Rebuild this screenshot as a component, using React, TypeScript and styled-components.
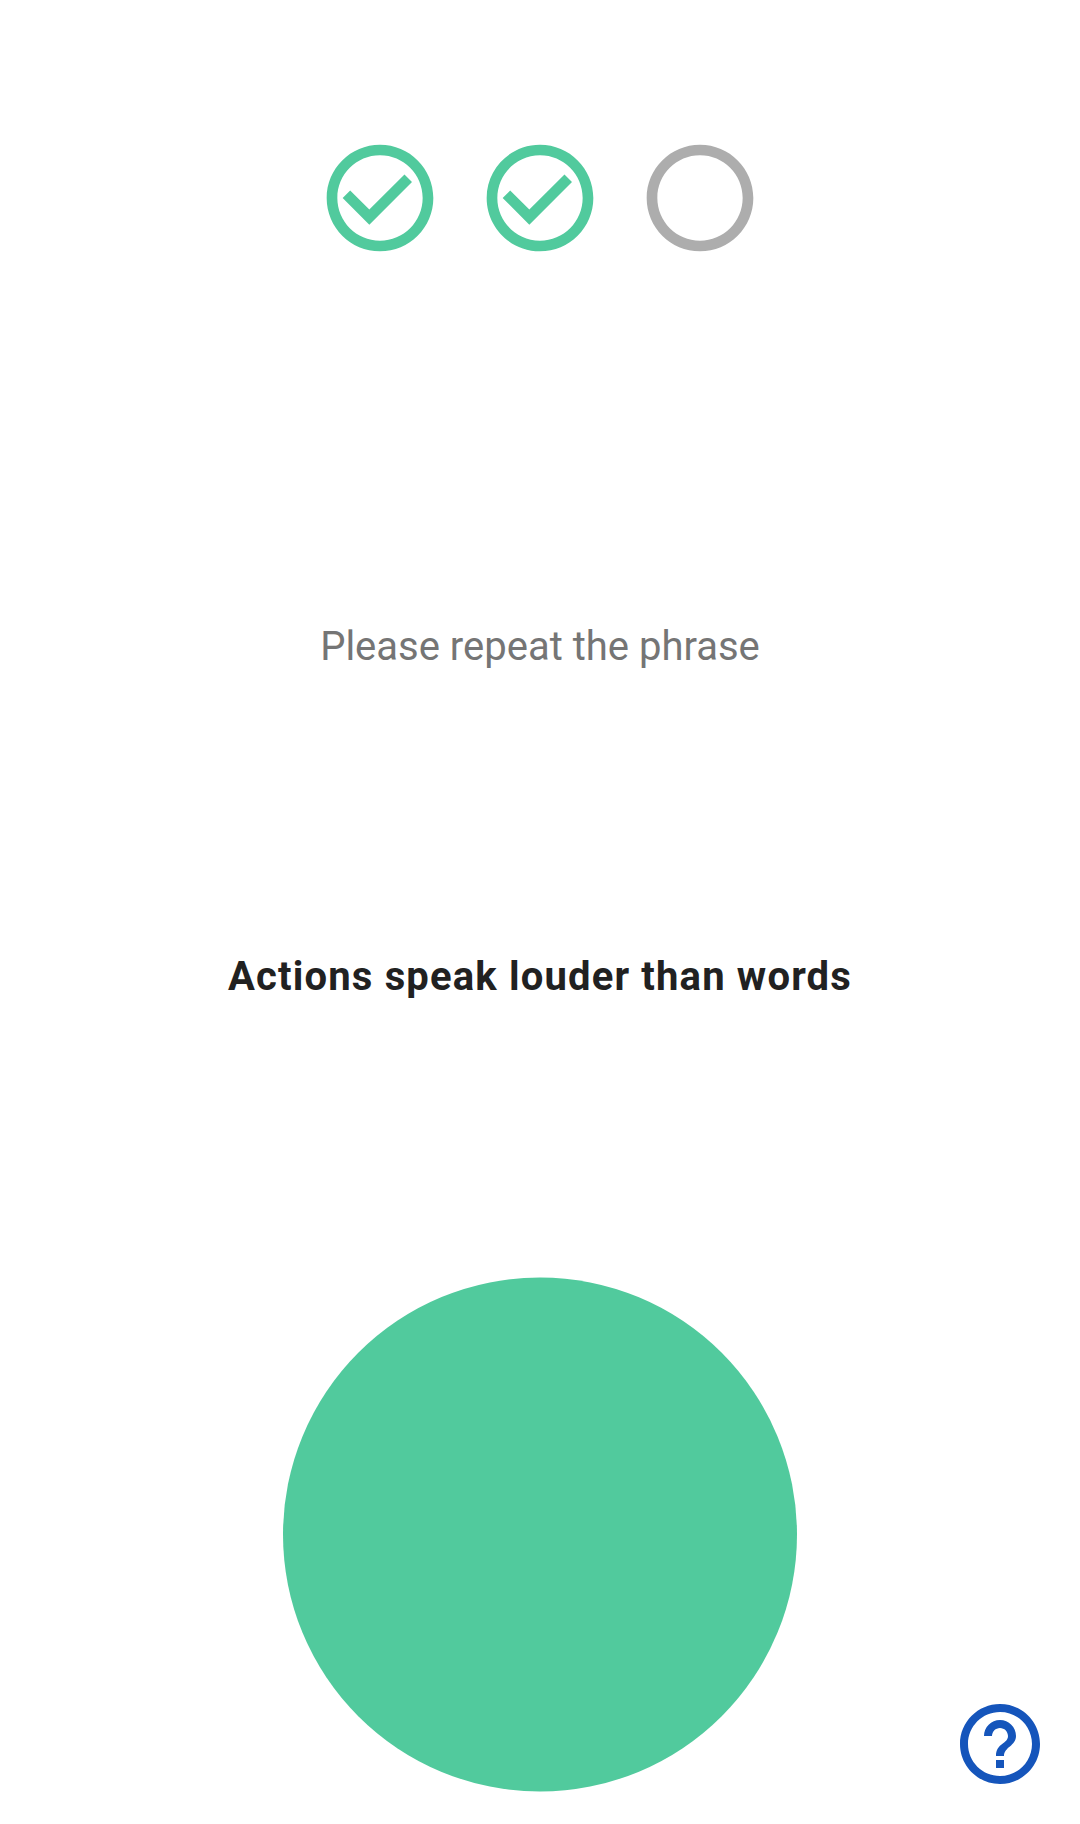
import React from "react";
import styled, { createGlobalStyle } from "styled-components";

const Global = createGlobalStyle`
  * { box-sizing: border-box; }
  body { margin: 0; background: #fff; font-family: Roboto, sans-serif; }
`;
const Screen = styled.main`
  position: relative;
  display: flex;
  flex-direction: column;
  align-items: center;
  width: 1080px;
  height: 1824px;
  padding-top: 134px;
  background: #fff;
  overflow: hidden;
`;
const Steps = styled.div`
  display: flex;
  gap: 32px;
  height: 128px;
`;
const StepIcon = styled.svg<{ $done: boolean }>`
  display: block;
  width: 128px;
  height: 128px;
  fill: ${(p) => (p.$done ? "#51ca9d" : "#adadad")};
`;
const Prompt = styled.p`
  margin: 361px 0 0;
  font-size: 40px;
  line-height: 48px;
  color: #757575;
  white-space: nowrap;
`;
const Phrase = styled.h1`
  margin: 282px 0 0;
  font-size: 40px;
  line-height: 48px;
  font-weight: 700;
  color: #212121;
  letter-spacing: 1.16px;
  white-space: nowrap;
`;
const RecordButton = styled.button`
  flex: none;
  width: 514px;
  height: 514px;
  margin: 277px 0 0;
  padding: 0;
  border: 0;
  border-radius: 50%;
  background: #51ca9d;
  transform: translateY(-0.5px);
`;
const HelpButton = styled.button`
  position: absolute;
  left: 952px;
  top: 1696px;
  width: 96px;
  height: 96px;
  padding: 0;
  border: 0;
  background: none;
`;
const HelpIcon = styled.svg`
  display: block;
  width: 96px;
  height: 96px;
  fill: #1555bb;
`;

const RING = "M12 2C6.48 2 2 6.48 2 12s4.48 10 10 10 10-4.48 10-10S17.52 2 12 2zm0 18c-4.42 0-8-3.58-8-8s3.58-8 8-8 8 3.58 8 8-3.58 8-8 8z";
const CHECK = "M16.59 7.58 10 14.17l-3.59-3.58L5 12l5 5 8-8z";
const QUESTION = "M11 18h2v-2h-2v2zm1-12c-2.21 0-4 1.79-4 4h2c0-1.1.9-2 2-2s2 .9 2 2c0 2-3 1.75-3 5h2c0-2.25 3-2.5 3-5 0-2.21-1.79-4-4-4z";

const steps = [true, true, false];

export default function App() {
  return (
    <>
      <Global />
      <Screen>
        <Steps>
          {steps.map((done, i) => (
            <StepIcon key={i} $done={done} viewBox="0 0 24 24">
              <path d={RING} />
              {done && <path d={CHECK} />}
            </StepIcon>
          ))}
        </Steps>
        <Prompt>Please repeat the phrase</Prompt>
        <Phrase>Actions speak louder than words</Phrase>
        <RecordButton aria-label="Record" />
        <HelpButton aria-label="Help">
          <HelpIcon viewBox="0 0 24 24">
            <path d={RING} />
            <path d={QUESTION} />
          </HelpIcon>
        </HelpButton>
      </Screen>
    </>
  );
}
